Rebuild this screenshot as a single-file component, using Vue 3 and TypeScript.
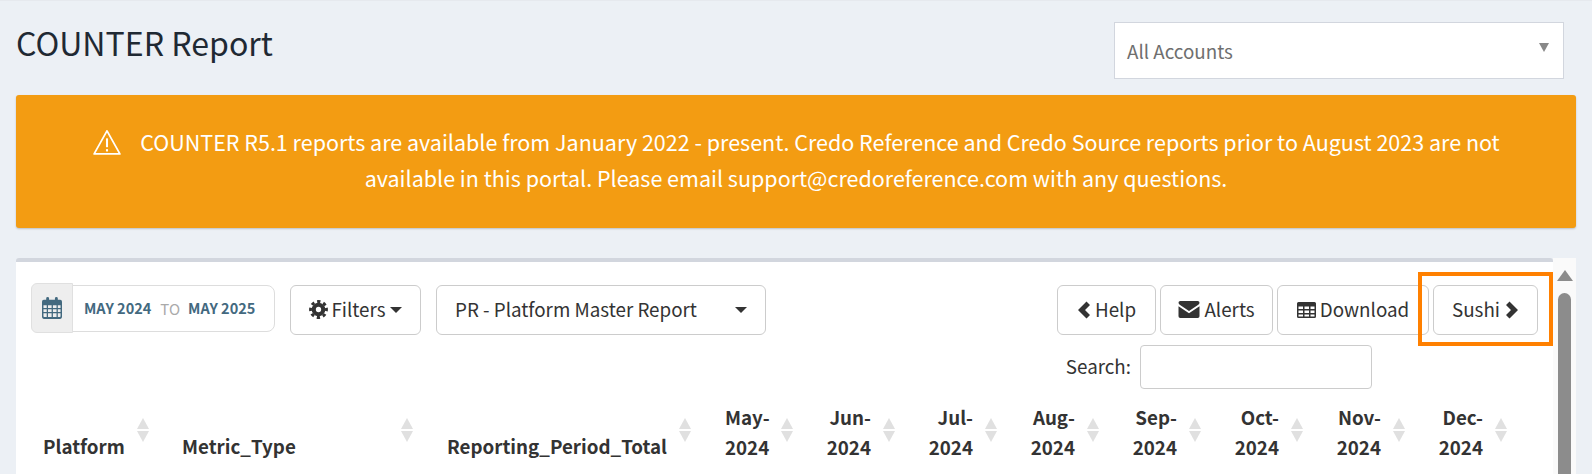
<script setup lang="ts">
const months: string[] = ['May', 'Jun', 'Jul', 'Aug', 'Sep', 'Oct', 'Nov', 'Dec']
</script>

<template>
  <div class="page">
    <div class="header">
      <h1 class="title">COUNTER Report</h1>
      <div class="account">
        <span>All Accounts</span>
        <i class="account-caret"></i>
      </div>
    </div>

    <div class="alert">
      <p>
        <svg class="warn" viewBox="0 0 28 26" fill="none" stroke="#fff" stroke-width="1.7" stroke-linejoin="round">
          <path d="M14 1.800 1.600 24h24.800z" />
          <path d="M14 9v8.500" stroke-width="2" />
          <path d="M14 19.400v2.200" stroke-width="2" />
        </svg>COUNTER R5.1 reports are available from January 2022 - present. Credo Reference and Credo Source reports prior to August 2023 are not available in this portal. Please email support@credoreference.com with any questions.
      </p>
    </div>

    <div class="scroller">
      <section class="box">
        <div class="toolbar">
          <div class="date">
            <span class="date-addon">
              <svg width="20" height="22" viewBox="0 0 22 24" fill="#43697f">
                <path d="M2 3h2.600V1.600a1.600 1.600 0 0 1 3.200 0V3h6.400V1.600a1.600 1.600 0 0 1 3.200 0V3H20a2 2 0 0 1 2 2v17a2 2 0 0 1-2 2H2a2 2 0 0 1-2-2V5a2 2 0 0 1 2-2zm-.4 6v3h3.600V9zm5 0v3h4V9zm5.400 0v3h4V9zm5.400 0v3h3V9zM1.600 13.400v3h3.600v-3zm5 0v3h4v-3zm5.400 0v3h4v-3zm5.400 0v3h3v-3zM1.600 17.800v3.200a.8.8 0 0 0 .8.8h2.800v-4zm5 0v4h4v-4zm5.400 0v4h4v-4zm5.400 0v4h2.200a.8.8 0 0 0 .8-.8v-3.200z" fill-rule="evenodd" />
              </svg>
            </span>
            <span class="date-range"><b>MAY 2024</b><em>TO</em><b>MAY 2025</b></span>
          </div>
          <button class="btn filters">
            <svg class="ico" width="19" height="19" viewBox="0 0 20 20" fill="none" stroke="#333">
              <circle cx="10" cy="10" r="8.400" stroke-width="3" stroke-dasharray="3.400 3.200" transform="rotate(-11.500 10 10)" />
              <circle cx="10" cy="10" r="5" stroke-width="4.400" />
            </svg>
            Filters<i class="caret"></i>
          </button>
          <button class="btn report">
            <span>PR - Platform Master Report</span><i class="caret"></i>
          </button>
          <div class="actions">
            <button class="btn help">
              <svg class="ico" width="14" height="18" viewBox="0 0 14 18" fill="#333"><path d="M9.500.5 13 4 8 9l5 5-3.500 3.500L1 9z" /></svg>
              Help
            </button>
            <button class="btn alerts">
              <svg class="ico" width="22" height="17" viewBox="0 0 21 17" fill="#333"><path d="M1.800 0h17.400A1.800 1.800 0 0 1 21 1.800c0 .8-.5 1.500-1.200 2L10.500 10 1.200 3.800C.5 3.300 0 2.600 0 1.800A1.800 1.800 0 0 1 1.800 0zM0 5.300l10.500 6.900L21 5.300v9.900a1.800 1.800 0 0 1-1.800 1.800H1.800A1.800 1.800 0 0 1 0 15.200z" /></svg>
              Alerts
            </button>
            <button class="btn download">
              <svg class="ico" width="19" height="16" viewBox="0 0 19 16" fill="#333"><path fill-rule="evenodd" d="M1.500 0h16A1.500 1.500 0 0 1 19 1.500v13a1.500 1.500 0 0 1-1.500 1.500h-16A1.500 1.500 0 0 1 0 14.500v-13A1.500 1.500 0 0 1 1.500 0zm0 4.500v2.500h4.500V4.500zm6 0v2.500h4.500V4.500zm6 0v2.500h4V4.500zm-12 4v2.500h4.500V8.500zm6 0v2.500h4.500V8.500zm6 0v2.500h4V8.500zm-12 4v2h4.500v-2zm6 0v2h4.500v-2zm6 0v2h4v-2z" /></svg>
              Download
            </button>
            <button class="btn sushi">
              Sushi
              <svg class="ico" width="14" height="18" viewBox="0 0 14 18" fill="#333"><path d="M4.500.5 1 4l5 5-5 5 3.500 3.500L13 9z" /></svg>
            </button>
          </div>
        </div>

        <div class="search">
          <label for="q">Search:</label>
          <input id="q" type="text" />
        </div>

        <div class="thead">
          <div class="th platform">Platform<i class="sort"></i></div>
          <div class="th metric">Metric_Type<i class="sort"></i></div>
          <div class="th total">Reporting_Period_Total<i class="sort"></i></div>
          <div v-for="(m, i) in months" :key="m" class="th month" :class="{ first: i === 0 }">
            <span>{{ m }}-<br />2024</span><i class="sort"></i>
          </div>
        </div>

        <div class="highlight"></div>
      </section>

      <div class="scrollbar">
        <i class="scroll-up"></i>
        <i class="scroll-thumb"></i>
      </div>
    </div>
  </div>
</template>

<style>
html, body { margin: 0; background: #ecf0f5; }
</style>

<style scoped>
.page {
  width: 1592px;
  height: 474px;
  overflow: hidden;
  box-sizing: border-box;
  padding: 0 16px;
  background: #ecf0f5;
  border-top: 1px solid #e6e9ee;
  color: #333;
  font-family: "Noto Sans CJK SC", "Noto Sans", sans-serif;
  font-size: 18.800px;
}
.header {
  display: flex;
  justify-content: space-between;
  height: 94px;
  padding: 21px 12px 0 0;
  box-sizing: border-box;
}
.title {
  margin: -1px 0 0;
  font-size: 32.100px;
  font-weight: 400;
  line-height: 42px;
  color: #1f2933;
}
.account {
  width: 450px;
  height: 57px;
  box-sizing: border-box;
  border: 1px solid #d2d6de;
  background: #fff;
  padding: 1px 12px 0;
  line-height: 54px;
  color: #6f6f6f;
  position: relative;
}
.account-caret {
  position: absolute;
  right: 14px;
  top: 20px;
  border-top: 9px solid #888;
  border-left: 5px solid transparent;
  border-right: 5px solid transparent;
}
.alert {
  height: 133px;
  box-sizing: border-box;
  background: #f39c12;
  border-radius: 3px;
  box-shadow: 0 1px 2px rgba(0, 0, 0, .2);
  color: #fff;
  padding: 29px 60px;
  text-align: center;
  font-size: 21.500px;
  line-height: 36px;
}
.alert p { margin: 0; }
.warn {
  width: 30px;
  height: 27px;
  margin-right: 18px;
  vertical-align: -5px;
}
.scroller {
  display: flex;
  margin-top: 30px;
  height: 216px;
  overflow: hidden;
}
.box {
  width: 1537px;
  background: #fff;
  border-top: 4px solid #d2d6de;
  border-radius: 3px 3px 0 0;
  box-sizing: border-box;
  position: relative;
  padding: 23px 15px 0;
}
.toolbar { display: flex; align-items: flex-start; height: 50px; }
.date {
  display: flex;
  align-items: center;
  height: 50px;
  margin-top: -2px;
  margin-right: 15px;
}
.date-addon {
  width: 42px;
  height: 50px;
  box-sizing: border-box;
  display: flex;
  align-items: center;
  justify-content: center;
  background: #eee;
  border: 1px solid #e0e0e0;
  border-radius: 6px 0 0 6px;
  position: relative;
  z-index: 1;
}
.date-range {
  width: 205px;
  height: 47px;
  margin-left: -3px;
  box-sizing: border-box;
  border: 1px solid #ddd;
  border-radius: 0 8px 8px 0;
  padding: 1px 0 0 13px;
  display: flex;
  align-items: center;
  font-size: 14.500px;
  line-height: 1;
}
.date-range b { color: #43697f; font-weight: 700; }
.date-range em { color: #aaa; font-style: normal; font-size: 15px; margin: 0 8px 0 9px; }
.btn {
  height: 50px;
  box-sizing: border-box;
  background: #fff;
  border: 1px solid #ccc;
  border-radius: 6px;
  font: inherit;
  color: #333;
  display: inline-flex;
  align-items: center;
  justify-content: center;
  padding: 0 0 1px;
  white-space: nowrap;
  line-height: 1;
}
.ico { flex: none; }
.caret {
  display: inline-block;
  border-top: 6px solid #333;
  border-left: 6px solid transparent;
  border-right: 6px solid transparent;
}
.filters { width: 131px; margin-right: 15px; gap: 3px; }
.filters .caret { margin-left: 1px; }
.report { width: 330px; justify-content: space-between; padding: 0 18px 1px; }
.actions { margin-left: auto; display: flex; gap: 4px; }
.help { width: 99px; gap: 4px; }
.alerts { width: 113px; gap: 4px; }
.download { width: 152px; gap: 4px; }
.sushi { width: 105px; gap: 5px; }
.search {
  display: flex;
  align-items: center;
  justify-content: flex-end;
  gap: 9px;
  margin-top: 10px;
  margin-right: 166px;
  height: 44px;
  line-height: 1;
}
.search label { padding-bottom: 2px; }
.search input {
  width: 232px;
  height: 44px;
  box-sizing: border-box;
  border: 1px solid #ccc;
  border-radius: 4px;
  background: #fff;
  outline: none;
}
.thead {
  display: flex;
  margin-top: 13px;
  padding-left: 12px;
  font-weight: 700;
  font-size: 18.750px;
  line-height: 30px;
  color: #333;
}
.th {
  position: relative;
  height: 60px;
  box-sizing: border-box;
  padding-top: 29px;
  white-space: nowrap;
}
.platform { width: 139px; }
.metric { width: 265px; }
.total { width: 278px; }
.month {
  width: 102px;
  padding-top: 0;
  padding-right: 26px;
  text-align: right;
}
.month.first { width: 70px; }
.sort {
  position: absolute;
  top: 16px;
  width: 12px;
  height: 24px;
}
.sort::before,
.sort::after {
  content: "";
  position: absolute;
  left: 0;
  border-left: 6px solid transparent;
  border-right: 6px solid transparent;
}
.sort::before { top: 0; border-bottom: 11.500px solid #e0e0e0; }
.sort::after { bottom: 0; border-top: 11.500px solid #e0e0e0; }
.platform .sort { left: 94px; }
.metric .sort { left: 219px; }
.total .sort { left: 232px; }
.month .sort { right: 2px; }
.highlight {
  position: absolute;
  left: 1402px;
  top: 10px;
  width: 135px;
  height: 74px;
  box-sizing: border-box;
  border: 4px solid #ff8000;
  pointer-events: none;
}
.scrollbar {
  width: 23px;
  background: #fafafa;
  position: relative;
}
.scroll-up {
  position: absolute;
  left: 4px;
  top: 12px;
  border-bottom: 11px solid #8c8c8c;
  border-left: 8px solid transparent;
  border-right: 8px solid transparent;
}
.scroll-thumb {
  position: absolute;
  left: 5px;
  top: 35px;
  width: 13px;
  height: 300px;
  border-radius: 7px;
  background: #8c8c8c;
}
</style>
